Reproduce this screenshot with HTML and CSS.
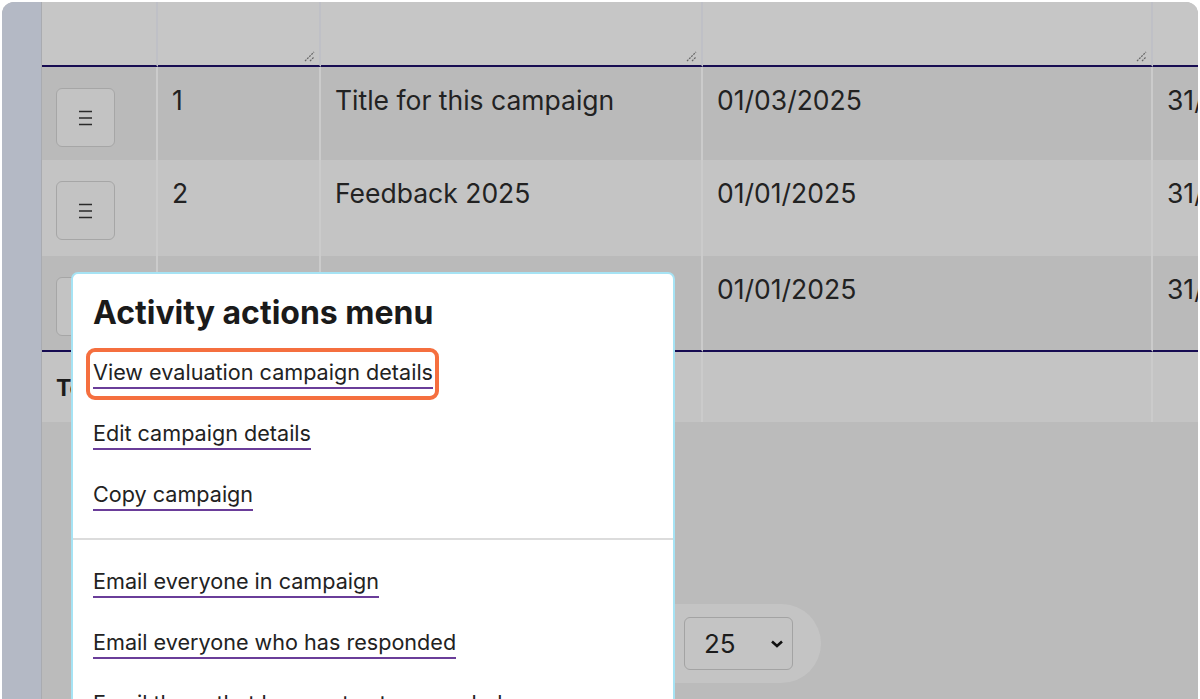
FILE: index.html
```html
<!DOCTYPE html>
<html lang="en">
<head>
<meta charset="utf-8">
<title>Campaigns</title>
<link rel="stylesheet" href="styles.css">
</head>
<body>
<div class="frame">
  <aside class="sidebar"></aside>
  <main class="main">
    <table class="grid">
      <colgroup>
        <col class="c1"><col class="c2"><col class="c3"><col class="c4"><col class="c5">
      </colgroup>
      <thead>
        <tr class="head">
          <th></th>
          <th><span class="grip"><svg width="12" height="12" viewBox="0 0 12 12"><path d="M2 11 L11 2 M7 11 L11 7" stroke="#666" stroke-width="1.2" stroke-dasharray="2 1" fill="none"/></svg></span></th>
          <th><span class="grip"><svg width="12" height="12" viewBox="0 0 12 12"><path d="M2 11 L11 2 M7 11 L11 7" stroke="#666" stroke-width="1.2" stroke-dasharray="2 1" fill="none"/></svg></span></th>
          <th><span class="grip"><svg width="12" height="12" viewBox="0 0 12 12"><path d="M2 11 L11 2 M7 11 L11 7" stroke="#666" stroke-width="1.2" stroke-dasharray="2 1" fill="none"/></svg></span></th>
          <th></th>
        </tr>
      </thead>
      <tbody>
        <tr class="row odd r1">
          <td><button class="menu-btn" aria-label="Actions"><svg width="13" height="16" viewBox="0 0 13 16"><path d="M0 1.5H13M0 8H13M0 14.5H13" stroke="#2a2a2a" stroke-width="1.4"/></svg></button></td>
          <td>1</td>
          <td>Title for this campaign</td>
          <td>01/03/2025</td>
          <td>31/03/2025</td>
        </tr>
        <tr class="row even r2">
          <td><button class="menu-btn" aria-label="Actions"><svg width="13" height="16" viewBox="0 0 13 16"><path d="M0 1.5H13M0 8H13M0 14.5H13" stroke="#2a2a2a" stroke-width="1.4"/></svg></button></td>
          <td>2</td>
          <td>Feedback 2025</td>
          <td>01/01/2025</td>
          <td>31/01/2025</td>
        </tr>
        <tr class="row odd last">
          <td><button class="menu-btn" aria-label="Actions"><svg width="13" height="16" viewBox="0 0 13 16"><path d="M0 1.5H13M0 8H13M0 14.5H13" stroke="#2a2a2a" stroke-width="1.4"/></svg></button></td>
          <td>3</td>
          <td>Survey</td>
          <td>01/01/2025</td>
          <td>31/01/2025</td>
        </tr>
      </tbody>
      <tfoot>
        <tr class="total">
          <td class="total-label">Total: 3</td>
          <td></td><td></td><td></td><td></td>
        </tr>
      </tfoot>
    </table>

    <div class="pager">
      <div class="pager-pill">
        <div class="select">
          <span>25</span>
          <svg width="14" height="10" viewBox="0 0 14 10"><path d="M2 2.5 L7 7 L12 2.5" stroke="#111" stroke-width="2.6" fill="none"/></svg>
        </div>
      </div>
    </div>
  </main>

  <div class="popup">
    <h2 class="popup-title">Activity actions menu</h2>
    <ul class="links">
      <li><a class="highlight" href="#">View evaluation campaign details</a></li>
      <li><a href="#">Edit campaign details</a></li>
      <li><a href="#">Copy campaign</a></li>
    </ul>
    <hr class="divider">
    <ul class="links">
      <li><a href="#">Email everyone in campaign</a></li>
      <li><a href="#">Email everyone who has responded</a></li>
      <li><a href="#">Email those that have not yet responded</a></li>
    </ul>
  </div>
</div>
</body>
</html>
```

FILE: styles.css
```css
* { box-sizing: border-box; }

html, body {
  margin: 0;
  padding: 0;
  background: #ffffff;
  font-family: Inter, "Noto Sans", sans-serif;
  color: #1c1c1c;
  overflow: hidden;
}

.frame {
  position: relative;
  margin: 2px 2px 0 2px;
  height: 697px;
  border-radius: 12px 12px 0 0;
  overflow: hidden;
  background: #bbbbbb;
  display: flex;
}

.sidebar {
  width: 40px;
  flex: none;
  background: #b4b9c5;
  border-right: 1px solid #a9abb0;
}

.main {
  flex: 1;
  min-width: 0;
  display: flex;
  flex-direction: column;
}

.grid {
  table-layout: fixed;
  border-collapse: separate;
  border-spacing: 0;
  width: 1200px;
  font-size: 26.5px;
}

.c1 { width: 116px; }
.c2 { width: 163px; }
.c3 { width: 382px; }
.c4 { width: 450px; }
.c5 { width: 89px; }

.grid th,
.grid td {
  border-right: 2px solid #cbcbcb;
  padding: 0;
  vertical-align: top;
  text-align: left;
  white-space: nowrap;
  overflow: hidden;
}

.head th {
  height: 65px;
  background: #c6c6c6;
  border-bottom: 2px solid #170c52;
  position: relative;
  border-right-color: #bfc0c6;
}

.grip {
  position: absolute;
  right: 4px;
  bottom: 3px;
  display: flex;
}

.row td {
  height: 94px;
  padding: 18px 0 0 14px;
  line-height: 30px;
  color: #222;
}

.r1 td { height: 93px; }
.r2 td { height: 96px; }

.row td:first-child {
  padding: 21px 0 0 14px;
}

.odd td { background: #bababa; }
.even td { background: #c4c4c4; }

.row.last td {
  height: 96px;
  border-bottom: 2px solid #170c52;
}

.menu-btn {
  width: 59px;
  height: 59px;
  border: 1.5px solid #a6a6a6;
  border-radius: 6px;
  background: #c3c3c3;
  display: flex;
  align-items: center;
  justify-content: center;
  padding: 0;
}

.total td {
  height: 70px;
  background: #c4c4c4;
  padding: 22px 0 0 14px;
  font-weight: 700;
  font-size: 23px;
}

.pager {
  display: flex;
  justify-content: flex-start;
  padding: 182px 0 0 0;
}

.pager-pill {
  margin-left: 440px;
  width: 339px;
  height: 79px;
  background: #c4c4c4;
  border-radius: 0 40px 40px 0;
  display: flex;
  align-items: center;
  justify-content: flex-end;
  padding-right: 28px;
}

.select {
  width: 109px;
  height: 53px;
  border: 1.5px solid #a3a3a3;
  border-radius: 6px;
  background: #c4c4c4;
  display: flex;
  align-items: center;
  justify-content: space-between;
  padding: 0 8px 0 19px;
  font-size: 26px;
  color: #1c1c1c;
}

.popup {
  position: absolute;
  left: 69px;
  top: 270px;
  width: 604px;
  height: 460px;
  background: #ffffff;
  border: 2px solid #a6e3f4;
  border-radius: 7px;
  padding: 20px 0 0 20px;
}

.popup-title {
  margin: 0 0 27px 0;
  font-size: 32px;
  font-weight: 700;
  line-height: 38px;
  color: #1a1a1a;
}

.links {
  list-style: none;
  margin: 0;
  padding: 0;
  display: flex;
  flex-direction: column;
  gap: 31px;
}

.links a {
  display: inline-block;
  font-size: 21.6px;
  line-height: 26px;
  color: #222;
  text-decoration: none;
  border-bottom: 2px solid #6a3d99;
  padding-bottom: 2px;
}

.highlight {
  position: relative;
}

.highlight::after {
  content: "";
  position: absolute;
  left: -7px;
  right: -6px;
  top: -11px;
  bottom: -13px;
  border: 4px solid #f56f3f;
  border-radius: 9px;
}

.divider {
  margin: 27px 0 28px -20px;
  border: 0;
  border-top: 2px solid #dcdcdc;
}
```
